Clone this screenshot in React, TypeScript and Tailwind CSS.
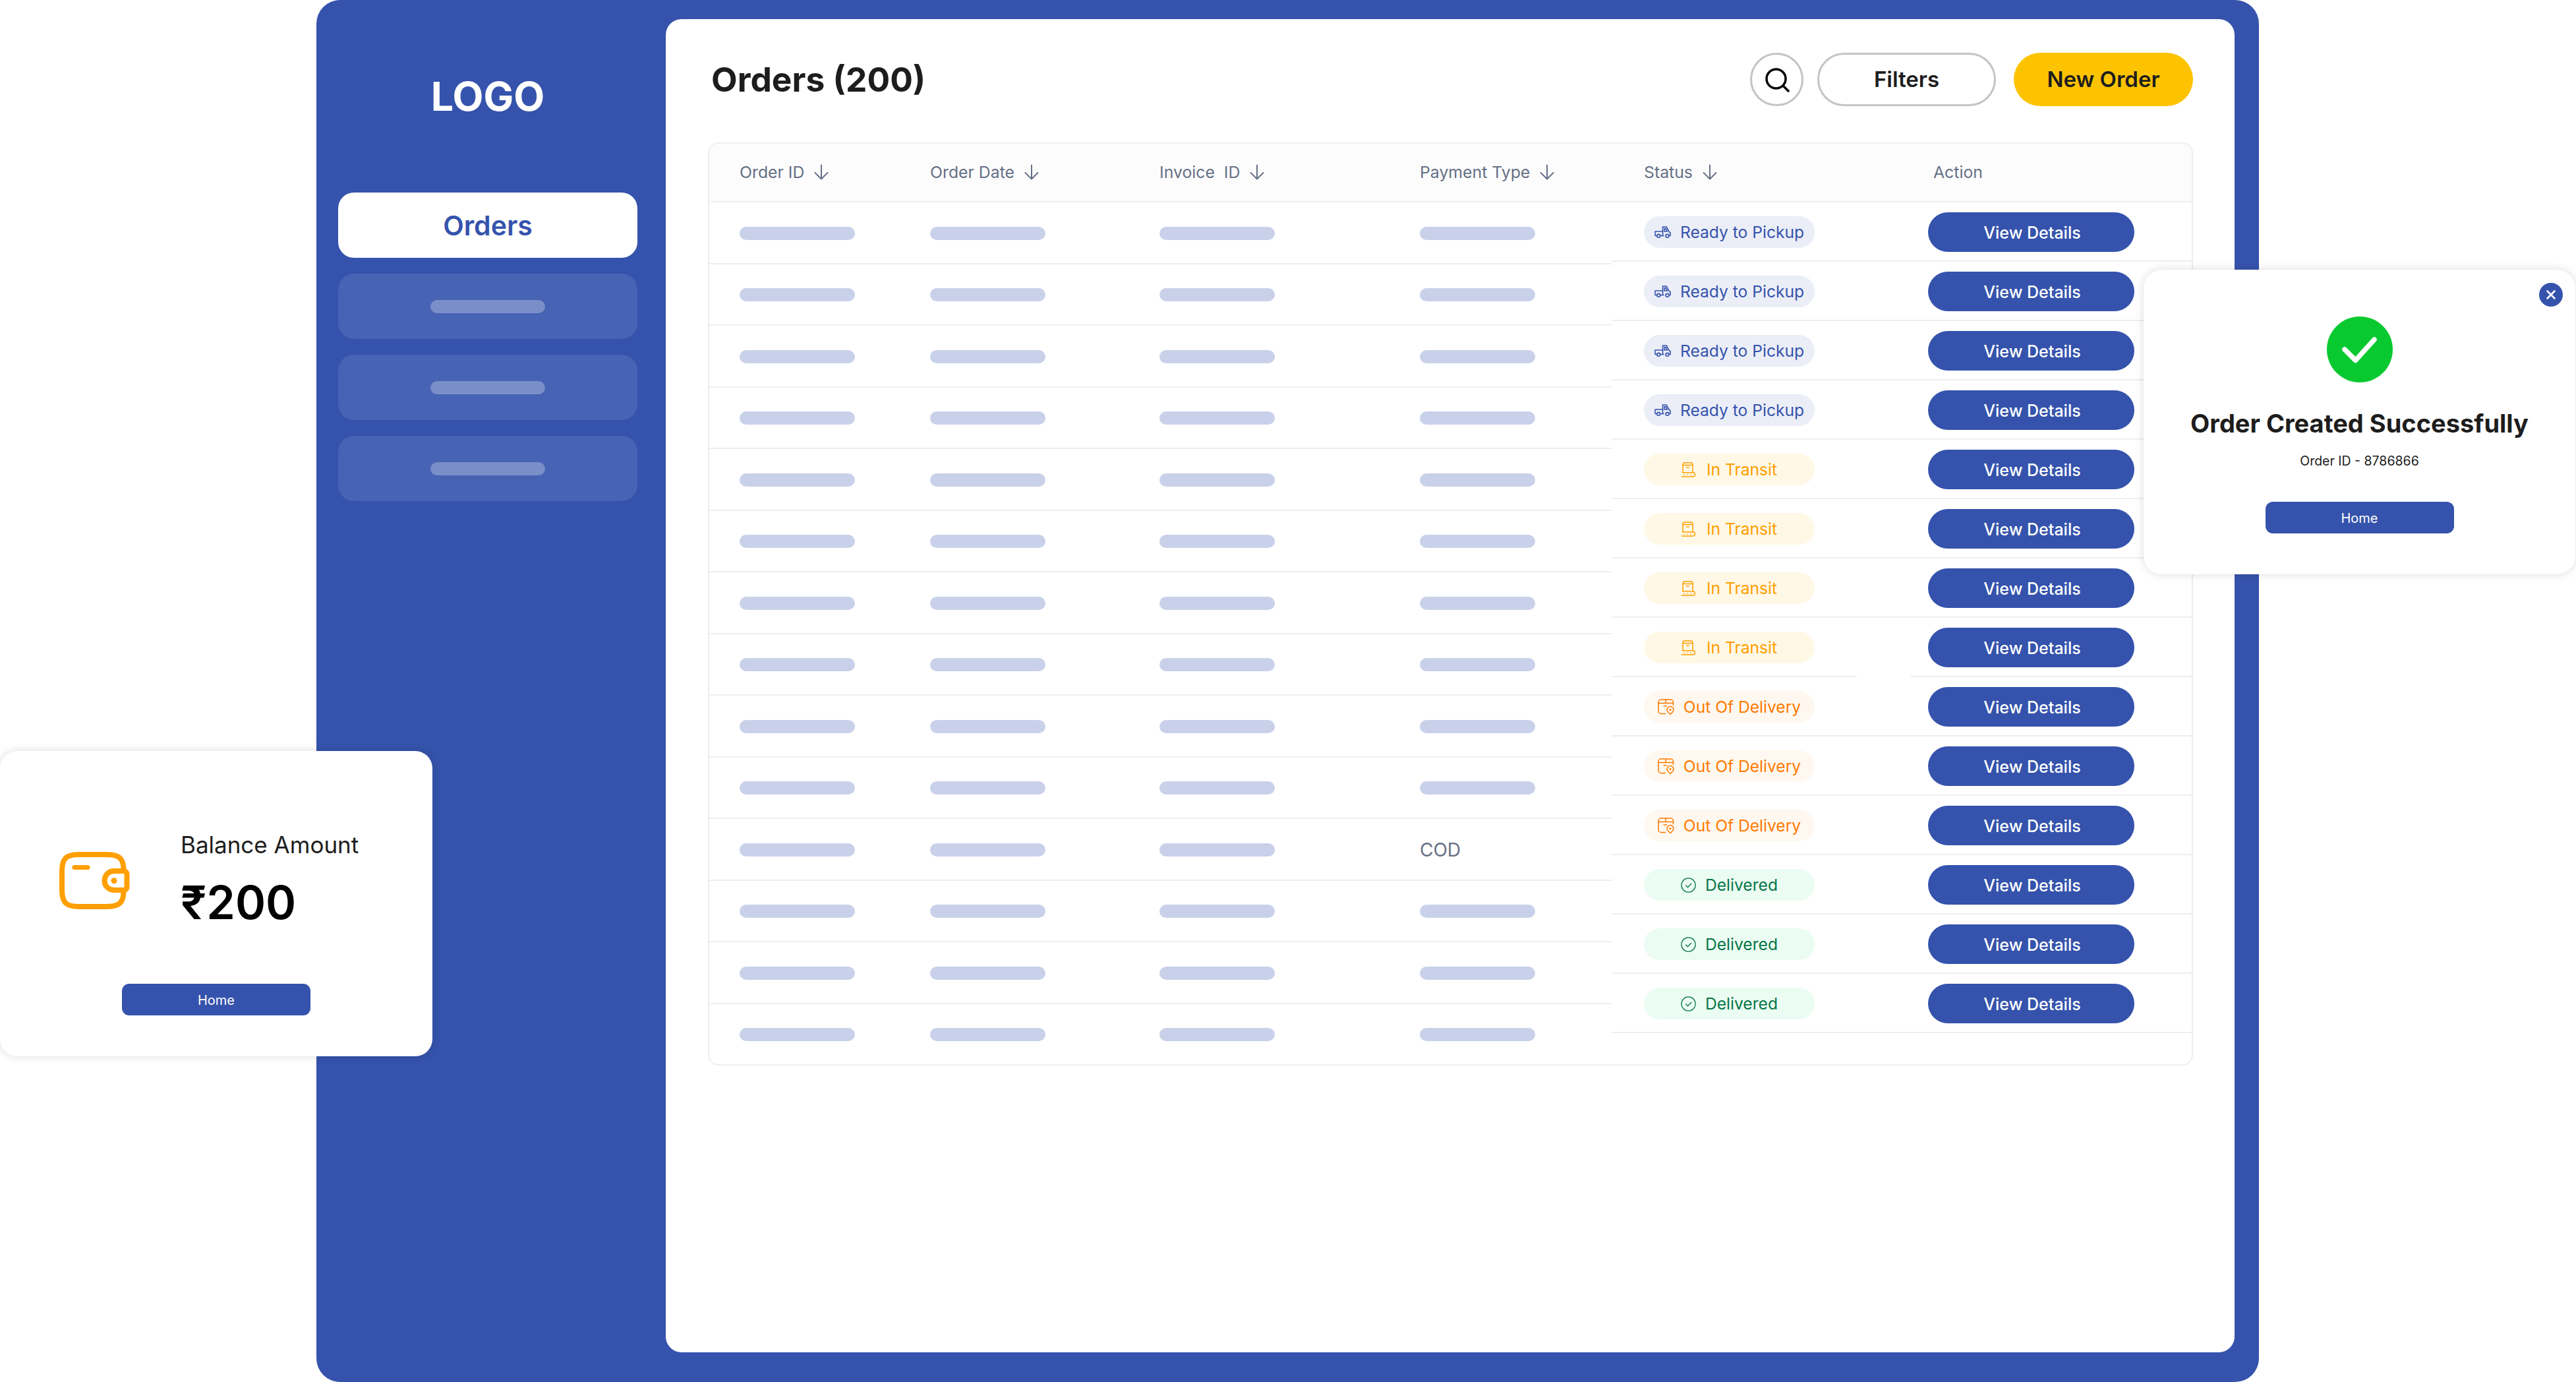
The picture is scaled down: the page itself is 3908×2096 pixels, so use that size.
import React from "react";

const ArrowDown = () => (
  <svg width="24" height="24" viewBox="0 0 24 24" fill="none" stroke="#667085" strokeWidth="2" strokeLinecap="round" strokeLinejoin="round">
    <path d="M12 1.5v21M2.5 13l9.5 9.5 9.5-9.5" />
  </svg>
);

const Truck = () => (
  <svg width="25" height="18" viewBox="0 0 25 18" fill="none" stroke="#3553ac" strokeWidth="1.6" strokeLinecap="round" strokeLinejoin="round">
    <path d="M3.6 14.5H1V8h11.5" />
    <path d="M9 14.5h5M12.5 14.5V1h5.5l4 7.5 2 1.2v4.8h-1.4" />
    <path d="M15 8V3.6h1.8L19.2 8z" />
    <circle cx="6.2" cy="14.8" r="2.4" />
    <circle cx="19.5" cy="14.8" r="2.4" />
  </svg>
);

const Belt = () => (
  <svg width="21" height="23" viewBox="0 0 21 23" fill="none" stroke="#ff9f00" strokeWidth="1.5" strokeLinecap="round" strokeLinejoin="round">
    <path d="M2 15.5V4A3.3 3.3 0 0 1 5.3.8h8.4A3.3 3.3 0 0 1 17 4v11.5" />
    <path d="M2 4.5h15M7.8 8h3.4" />
    <path d="M1.5 15.8h15.8a3 3 0 0 1 0 6.2H.5" />
    <path d="M4 19h.3M9 19h.3M14 19h.3" />
  </svg>
);

const Parcel = () => (
  <svg width="25" height="24" viewBox="0 0 25 24" fill="none" stroke="#ff7a00" strokeWidth="1.5" strokeLinecap="round" strokeLinejoin="round">
    <path d="M11.5 22.5H5A4 4 0 0 1 1 18.500V5a4 4 0 0 1 4-4h14.500a4 4 0 0 1 4 4v4.500" />
    <path d="M1 6.500h22.500M12 1v5.500M9 11h4.500" />
    <path d="M19 11.500a5 5 0 0 1 5 5c0 2.800-5 6.800-5 6.800s-5-4-5-6.800a5 5 0 0 1 5-5z" fill="#fff8f0" />
    <circle cx="19" cy="16.500" r="0.800" />
  </svg>
);

const CheckCircle = () => (
  <svg width="23" height="23" viewBox="0 0 23 23" fill="none" stroke="#067647" strokeWidth="1.3" strokeLinecap="round" strokeLinejoin="round">
    <circle cx="11.500" cy="11.500" r="10.600" />
    <path d="M7.500 12l3 2.800 5.300-5.600" />
  </svg>
);

const Wallet = () => (
  <svg width="107" height="87" viewBox="0 0 107 87" fill="none" stroke="#ff9f00" strokeWidth="8" strokeLinecap="round" strokeLinejoin="round">
    <path d="M97.400 25V23C96 9 90 4 70 4H30C10 4 4 10 4 30V57C4 77 10 83 30 83H70C90 83 96 78 97.400 64V60" />
    <path d="M86 29H98a4.500 4.500 0 0 1 4.500 4.500V53.500a4.500 4.500 0 0 1-4.500 4.500H83a14.500 14.500 0 0 1 0-29z" />
    <path d="M23 23.500H43" strokeWidth="7" />
    <circle cx="83" cy="43.700" r="4.500" fill="#ff9f00" stroke="none" />
  </svg>
);

const kinds = {
  pickup: { label: "Ready to Pickup", box: "bg-[#ebeef7] text-[#3553ac] gap-[14px]", icon: <Truck /> },
  transit: { label: "In Transit", box: "bg-[#fff8e6] text-[#ff9f00] gap-[17px]", icon: <Belt /> },
  out: { label: "Out Of Delivery", box: "bg-[#fff8f0] text-[#ff7a00] gap-[14px]", icon: <Parcel /> },
  done: { label: "Delivered", box: "bg-[#ebfcf3] text-[#067647] gap-[14px]", icon: <CheckCircle /> },
};

type Kind = keyof typeof kinds;

const statuses: Kind[] = [
  "pickup", "pickup", "pickup", "pickup",
  "transit", "transit", "transit", "transit",
  "out", "out", "out",
  "done", "done", "done",
];

const Bar = () => <div className="h-[20px] w-[175px] rounded-full bg-[#c9d1ea]" />;

const HeadCell = ({ label, className }: { label: string; className: string }) => (
  <div className={`flex items-center gap-[14px] text-[24.8px] leading-none whitespace-pre text-[#667085] ${className}`}>
    <span>{label}</span>
    <ArrowDown />
  </div>
);

const HomeButton = () => (
  <button className="h-[48px] w-[286px] rounded-[11px] bg-[#3553ac] pt-[2px] text-[20px] text-white">Home</button>
);

export default function App() {
  return (
    <div className="relative h-[2096px] w-[3908px] overflow-hidden bg-white font-['Inter',sans-serif]">
      <div className="ml-[480px] flex h-full w-[2947px] rounded-[36px] bg-[#3553ac]">
        <aside className="flex w-[530px] shrink-0 flex-col pr-[43px] pl-[33px]">
          <div className="flex h-[292px] items-center justify-center text-[61px] leading-none font-bold text-white">LOGO</div>
          <nav className="flex flex-col gap-[24px]">
            <div className="flex h-[99px] items-center justify-center rounded-[24px] bg-white pt-[2px] text-[41px] font-semibold text-[#3553ac]">Orders</div>
            {[0, 1, 2].map((i) => (
              <div key={i} className="flex h-[99px] items-center justify-center rounded-[24px] bg-[#4763b4]">
                <div className="h-[20px] w-[174px] rounded-full bg-[#7a8ec8]" />
              </div>
            ))}
          </nav>
        </aside>

        <main className="mt-[29px] mr-[37px] mb-[45px] flex-1 rounded-[24px] bg-white pt-[51px] pr-[63px] pl-[64px]">
          <div className="flex h-[81px] items-center pl-[5px]">
            <h1 className="flex-1 text-[51.5px] leading-none font-bold text-[#1d1d1d]">Orders (200)</h1>
            <button className="flex h-[81px] w-[81px] items-center justify-center rounded-full border-[3px] border-[#c4c4c4]">
              <svg width="38" height="38" viewBox="0 0 38 38" fill="none" stroke="#000" strokeWidth="3.5" strokeLinecap="round">
                <circle cx="17.500" cy="17.500" r="14.500" />
                <path d="M28 28l8 8" />
              </svg>
            </button>
            <button className="ml-[21px] h-[81px] w-[271px] rounded-full border-[3px] border-[#c4c4c4] text-[33px] font-semibold text-[#1d1d1d]">Filters</button>
            <button className="ml-[27px] h-[81px] w-[272px] rounded-full bg-[#fdc300] text-[33px] font-semibold text-[#1d1d1d]">New Order</button>
          </div>

          <div className="mt-[55px] overflow-hidden rounded-[16px] border-2 border-[#eeeef2]">
            <div className="flex h-[89px] items-center border-b-2 border-[#eeeef2] bg-[#fcfcfd] pl-[46px]">
              <HeadCell label="Order ID" className="w-[289px]" />
              <HeadCell label="Order Date" className="w-[348px]" />
              <HeadCell label="Invoice  ID" className="w-[395px]" />
              <HeadCell label="Payment Type" className="w-[340px]" />
              <HeadCell label="Status" className="w-[439px]" />
              <div className="text-[24.8px] leading-none text-[#667085]">Action</div>
            </div>

            <div className="flex">
              <div className="w-[1369px] shrink-0">
                {Array.from({ length: 14 }).map((_, i) => (
                  <div key={i} className="grid h-[93.5px] grid-cols-[289px_348px_395px_1fr] items-center border-b-2 border-[#eeeef2] pt-[2px] pl-[46px] last:h-[91px] last:border-b-0">
                    <Bar />
                    <Bar />
                    <Bar />
                    {i === 10 ? <span className="text-[28px] leading-none text-[#667085]">COD</span> : <Bar />}
                  </div>
                ))}
              </div>

              <div className="flex-1">
                {statuses.map((s, i) => {
                  const k = kinds[s];
                  return (
                    <div key={i} className="relative flex h-[90px] items-center border-b-2 border-[#eeeef2] pt-[2px] pl-[49px]">
                      <div className={`flex h-[48px] w-[259px] items-center justify-center rounded-full text-[24.6px] leading-none ${k.box}`}>
                        {k.icon}
                        <span>{k.label}</span>
                      </div>
                      <button className="ml-[172px] h-[60px] w-[313px] rounded-full bg-[#3553ac] pt-[3px] pl-[3px] text-[25px] font-medium text-white">View Details</button>
                      {i === 7 && <span className="absolute bottom-[-2px] left-[372px] h-[2px] w-[82px] bg-white" />}
                    </div>
                  );
                })}
              </div>
            </div>
          </div>
        </main>
      </div>

      {/* Floating balance card */}
      <div className="absolute top-[1139px] left-0 flex h-[463px] w-[656px] flex-col items-center rounded-[26px] bg-white pt-[122px] shadow-[0_0_14px_rgba(0,0,0,0.14)]">
        <div className="flex w-full items-center pl-[90px]">
          <Wallet />
          <div className="ml-[77px] flex flex-col">
            <div className="text-[35px] leading-[40px] text-[#1d1d1d]">Balance Amount</div>
            <div className="mt-[28px] text-[70px] leading-[80px] font-semibold text-black">₹200</div>
          </div>
        </div>
        <div className="mt-[83px]">
          <HomeButton />
        </div>
      </div>

      {/* Floating success card */}
      <div className="absolute top-[409px] left-[3252px] flex h-[462px] w-[655px] flex-col items-center rounded-[28px] bg-white pt-[71px] shadow-[0_0_14px_rgba(0,0,0,0.14)]">
        <button className="absolute top-[20px] right-[19px] flex h-[36px] w-[36px] items-center justify-center rounded-full bg-[#3553ac]">
          <svg width="14" height="14" viewBox="0 0 14 14" fill="none" stroke="#fff" strokeWidth="2.6" strokeLinecap="round">
            <path d="M1.500 1.500l11 11M12.500 1.500l-11 11" />
          </svg>
        </button>
        <svg width="100" height="100" viewBox="0 0 100 100" fill="none">
          <circle cx="50" cy="50" r="50" fill="#09c930" />
          <path d="M27 50l16.500 16.500L72 35" stroke="#fff" strokeWidth="7.500" strokeLinecap="round" strokeLinejoin="round" />
        </svg>
        <div className="mt-[38px] text-[38px] leading-[48px] font-bold text-[#1d1d1d]">Order Created Successfully</div>
        <div className="mt-[19px] text-[19.5px] leading-[28px] text-[#1d1d1d]">Order ID - 8786866</div>
        <div className="mt-[48px]">
          <HomeButton />
        </div>
      </div>
    </div>
  );
}
